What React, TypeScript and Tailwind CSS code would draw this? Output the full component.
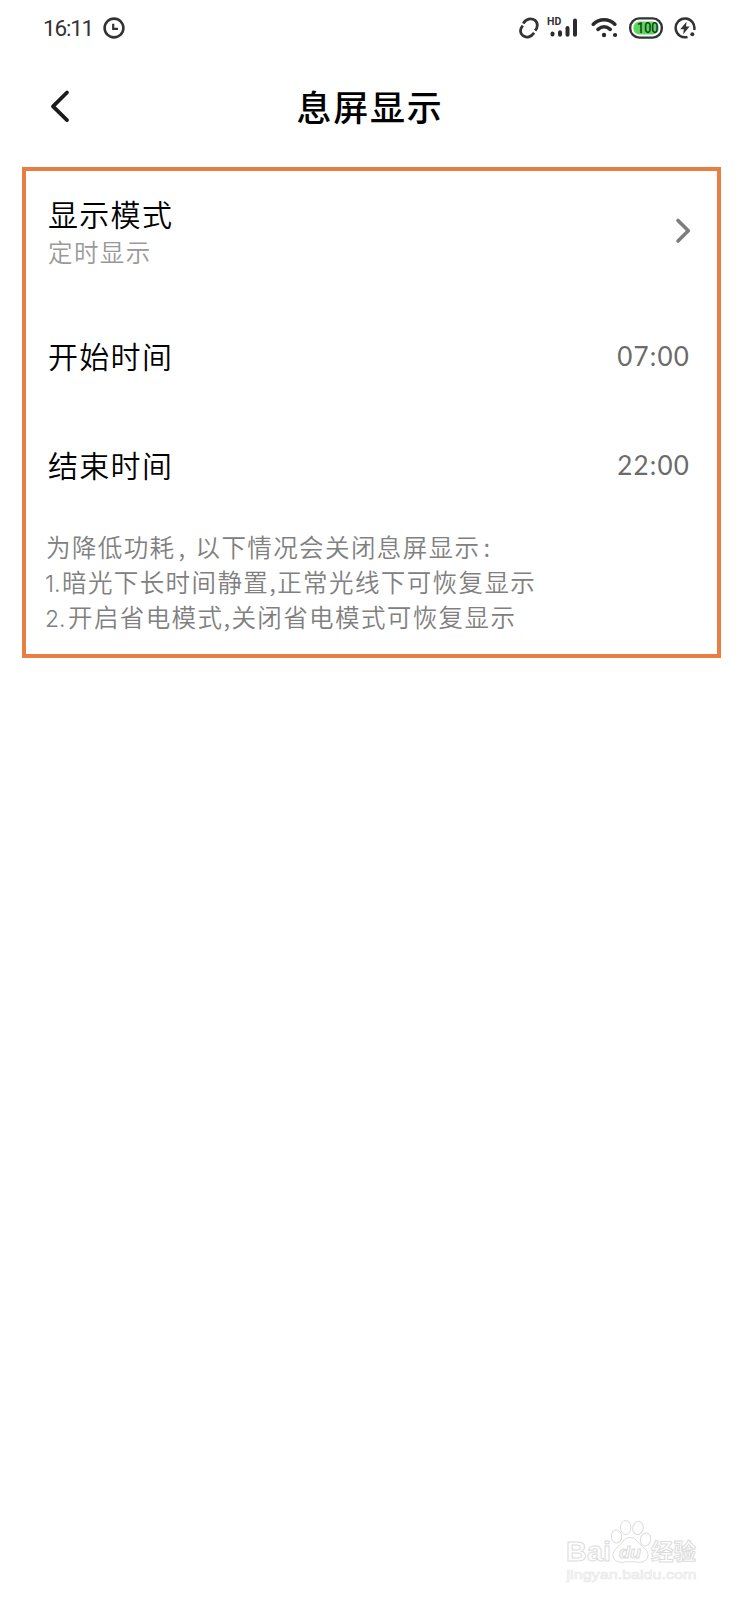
import type { ReactNode } from "react";

const notes = [
  { prefix: "", text: "为降低功耗", comma: true, rest: "以下情况会关闭息屏显示", colon: true },
  { prefix: "1.", text: "暗光下长时间静置,正常光线下可恢复显示", width: "w-[17px]" },
  { prefix: "2.", text: "开启省电模式,关闭省电模式可恢复显示", width: "w-[23px]" },
];

function ClockIcon() {
  return (
    <svg width="22" height="22" viewBox="0 0 22 22" fill="none" stroke="#333" strokeWidth="2.6">
      <circle cx="11" cy="11" r="9.4" />
      <path d="M10.2 6.8v5h4.8" strokeWidth="2.2" />
    </svg>
  );
}

function LinkIcon() {
  return (
    <svg width="20" height="22" viewBox="0 0 20 22" fill="none" stroke="#333" strokeWidth="2.8">
      <path d="M4.2 6.6C7 1.6 12.2.6 15.8 3.2c3.4 2.6 3.2 7.2.2 10.6" />
      <path d="M3.8 8.6C.8 12 .6 16.2 3.9 18.7c3.6 2.5 8.3 1.5 11.2-3" />
      <path d="M7 9.5 2.5 6.5M17 15l-4.5-3" stroke="#fff" strokeWidth="1.4" />
    </svg>
  );
}

function SignalIcon() {
  return (
    <svg width="32" height="32" viewBox="0 -5 32 32" fill="none" stroke="#2b2b2b" strokeWidth="4" strokeLinecap="round">
      <text x="0" y="7.6" fontSize="10.5" fontWeight="700" fill="#333" stroke="none" fontFamily="Roboto, sans-serif">
        HD
      </text>
      <path d="M5.5 16.6v1M13 15.3v2.5M20.5 11v6.8M28 3.5v14.3" />
    </svg>
  );
}

function WifiIcon() {
  return (
    <svg width="26" height="22" viewBox="0 0 26 22" fill="none" stroke="#2b2b2b" strokeWidth="3.6" strokeLinecap="round">
      <path d="M2.3 7.2c6-6 15.5-6 21.5 0M7 12.4c3.8-3.3 8.4-3.3 12.2 0" />
      <circle cx="13" cy="18" r="2.2" fill="#2b2b2b" stroke="none" />
      <circle cx="24" cy="18" r="2.1" fill="#2b2b2b" stroke="none" />
    </svg>
  );
}

function BatteryIcon() {
  return (
    <svg width="34" height="22" viewBox="0 0 34 22">
      <rect x="1.2" y="1.4" width="31.6" height="19.2" rx="9.2" fill="#fff" stroke="#333" strokeWidth="2.4" />
      <rect x="4.4" y="4.6" width="25.2" height="12.8" rx="6" fill="#5bd760" />
      <text x="8" y="16" fontSize="14" fontWeight="500" fill="#173d18" textLength="21.5" lengthAdjust="spacingAndGlyphs" fontFamily="Roboto, sans-serif">
        100
      </text>
    </svg>
  );
}

function ChargeIcon() {
  return (
    <svg width="22" height="22" viewBox="0 0 22 22" fill="none" stroke="#333" strokeWidth="2.5">
      <path d="M13.5 20A9.4 9.4 0 1 1 20.2 13" />
      <path d="M12.6 4.8 6.2 12.2h3.6L9.2 17.2l6.4-7.6H12z" fill="#333" stroke="none" />
      <circle cx="18.3" cy="17.3" r="2" fill="#333" stroke="none" />
    </svg>
  );
}

function StatusBar() {
  return (
    <div className="flex h-14 items-center pl-[43px] pr-[42px]">
      <span className="mt-[2px] w-[49px] font-['Roboto',sans-serif] text-[22.5px] font-[450] tracking-[-1.2px] text-[#333]">16:11</span>
      <span className="ml-[11px]">
        <ClockIcon />
      </span>
      <div className="ml-auto flex items-center">
        <LinkIcon />
        <span className="ml-[8px]"><SignalIcon /></span>
        <span className="ml-[12px]"><WifiIcon /></span>
        <span className="ml-[12px]"><BatteryIcon /></span>
        <span className="ml-[11px]"><ChargeIcon /></span>
      </div>
    </div>
  );
}

function Row({ title, children, className }: { title: string; children: ReactNode; className: string }) {
  return (
    <div className={`flex items-start justify-between ${className}`}>
      <span className="text-[30px] leading-9 font-[350] tracking-[1.3px]">{title}</span>
      <span className="mt-[1px] font-['Lato',sans-serif] text-[26px] leading-9 tracking-[1.2px] text-[#6b6b6b]">{children}</span>
    </div>
  );
}

function Watermark() {
  return (
    <svg
      className="absolute right-[36px] bottom-[12px]"
      width="140"
      height="72"
      viewBox="0 0 140 72"
      fill="#fff"
      stroke="#dcdcdc"
      strokeWidth="1"
      fontFamily="'Liberation Sans', sans-serif"
    >
      <text x="4" y="45" fontSize="28" fontWeight="700" textLength="45" lengthAdjust="spacingAndGlyphs">Bai</text>
      <ellipse cx="54.5" cy="20.5" rx="5.2" ry="6.5" transform="rotate(-8 54.5 20.5)" />
      <ellipse cx="63.7" cy="11.5" rx="5.2" ry="7" />
      <ellipse cx="76" cy="12" rx="5.2" ry="6.6" transform="rotate(12 76 12)" />
      <ellipse cx="83.5" cy="23.5" rx="5.2" ry="6.5" transform="rotate(10 83.5 23.5)" />
      <path d="M68 21.5c-5 0-7 4-9.5 7-3 3-7.5 5.500-7.500 10.500 0 5.500 5 7.800 10 7.200 4.500-.7 10-.7 14.500 0 6 .8 10.500-2 10.500-7.200 0-5-5-7.500-8-10.500C75.500 25.500 73 21.500 68 21.500z" />
      <text x="57" y="41.5" fontSize="17" fontWeight="700" fontStyle="italic" textLength="22" lengthAdjust="spacingAndGlyphs">du</text>
      <text x="89" y="43.5" fontSize="22.5" fontWeight="700" textLength="45" lengthAdjust="spacing" fontFamily="'Noto Sans CJK SC', sans-serif">经验</text>
      <text x="4.5" y="63" fontSize="13.5" textLength="130" lengthAdjust="spacingAndGlyphs" stroke="#e8e8e8" strokeWidth=".7">jingyan.baidu.com</text>
    </svg>
  );
}

export default function App() {
  return (
    <div className="relative h-[1600px] w-[738px] overflow-hidden bg-white font-['Noto_Sans_CJK_SC',sans-serif] text-black">
      <StatusBar />

      <header className="grid h-[111px] grid-cols-[1fr_auto_1fr] items-start pt-[25px]">
        <svg className="mt-[7px] ml-[48px]" width="24" height="36" viewBox="0 0 24 36" fill="none" stroke="#1c1c1c" strokeWidth="3.8" strokeLinecap="round" strokeLinejoin="round">
          <path d="M19 4.5 5 18.3l14 13.8" />
        </svg>
        <h1 className="ml-[2px] text-[35px] leading-[50px] font-medium tracking-[1.8px]">息屏显示</h1>
      </header>

      <main className="mr-[17px] ml-[22px] h-[491px] border-4 border-[#e97e42] pr-[27px] pl-[22px]">
        <div className="flex items-start justify-between pt-[24px]">
          <div className="flex flex-col">
            <span className="text-[30px] leading-9 font-[350] tracking-[1.3px]">显示模式</span>
            <span className="mt-[3px] text-[24.5px] leading-9 font-[350] tracking-[1.4px] text-[#999]">定时显示</span>
          </div>
          <svg className="mt-[22px] -mr-[1px]" width="16" height="28" viewBox="0 0 16 28" fill="none" stroke="#7d7d7d" strokeWidth="3.6" strokeLinecap="round" strokeLinejoin="round">
            <path d="M3 3.5 13.3 13.7 3 24" />
          </svg>
        </div>

        <Row title="开始时间" className="mt-[67px]">07:00</Row>
        <Row title="结束时间" className="mt-[72px]">22:00</Row>

        <div className="-ml-[2px] mt-[46px] text-[24.5px] leading-[35px] font-[350] tracking-[1.4px] whitespace-nowrap text-[#808080]">
          {notes.map((note) => (
            <p key={note.text} className="h-[35px]">
              {note.prefix && (
                <span className={`-ml-[1px] inline-block font-['Inter',sans-serif] text-[23px] font-light tracking-normal ${note.width}`}>{note.prefix}</span>
              )}
              {note.text}
              {note.comma && <span className="inline-block w-[20px] pl-[3px]">,</span>}
              {note.rest}
              {note.colon && <span className="pl-[3px]">:</span>}
            </p>
          ))}
        </div>
      </main>

      <Watermark />
    </div>
  );
}
